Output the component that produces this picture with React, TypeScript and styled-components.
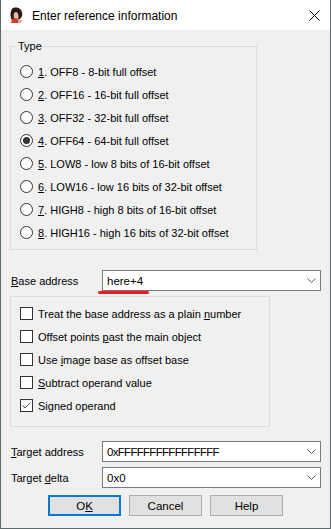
import React from "react";
import styled, { createGlobalStyle } from "styled-components";

const GlobalStyle = createGlobalStyle`
  html, body {
    margin: 0;
    padding: 0;
    background: #6b6f8a;
  }
  * {
    box-sizing: border-box;
  }
`;

const radioOptions = [
  { key: "1", text: ". OFF8 - 8-bit full offset" },
  { key: "2", text: ". OFF16 - 16-bit full offset" },
  { key: "3", text: ". OFF32 - 32-bit full offset" },
  { key: "4", text: ". OFF64 - 64-bit full offset", checked: true },
  { key: "5", text: ". LOW8 - low 8 bits of 16-bit offset" },
  { key: "6", text: ". LOW16 - low 16 bits of 32-bit offset" },
  { key: "7", text: ". HIGH8 - high 8 bits of 16-bit offset" },
  { key: "8", text: ". HIGH16 - high 16 bits of 32-bit offset" },
];

const checkOptions = [
  { pre: "Treat the base address as a plain ", key: "n", post: "umber" },
  { pre: "Offset points ", key: "p", post: "ast the main object" },
  { pre: "Use ", key: "i", post: "mage base as offset base" },
  { pre: "", key: "S", post: "ubtract operand value" },
  { pre: "Si", key: "", post: "gned operand", checked: true },
];

const Window = styled.div`
  width: 331px;
  height: 529px;
  display: flex;
  flex-direction: column;
  border: 1px solid #5c6b70;
  border-top: none;
  background: #f0f0f0;
  font-family: "Liberation Sans", Arial, sans-serif;
  font-size: 11px;
  color: #000;
`;

const TitleBar = styled.div`
  height: 30px;
  display: flex;
  align-items: center;
  background: #fff;
  padding-left: 7px;
  padding-right: 10px;
  flex-shrink: 0;
`;

const TitleText = styled.span`
  font-size: 12px;
  margin-left: 8px;
  flex: 1;
  padding-top: 1px;
`;

const Body = styled.div`
  flex: 1;
  display: flex;
  flex-direction: column;
  padding: 10px 9px 0 9px;
`;

const GroupBox = styled.fieldset<{ $width: number }>`
  width: ${(p) => p.$width}px;
  margin: 0;
  border: 1px solid #dcdcdc;
  padding: 7px 0 5px 9px;
  min-width: 0;
`;

const Legend = styled.legend`
  padding: 0 2px;
  margin-left: -4px;
  line-height: 13px;
`;

const PlainGroup = styled.div<{ $width: number }>`
  width: ${(p) => p.$width}px;
  border: 1px solid #dcdcdc;
  padding: 5px 0 9px 9px;
  margin-top: 5px;
`;

const OptionRow = styled.div`
  height: 23px;
  display: flex;
  align-items: center;
  gap: 5px;
  white-space: nowrap;
`;

const RadioCircle = styled.span<{ $checked?: boolean }>`
  width: 13px;
  height: 13px;
  border-radius: 50%;
  border: 1px solid #333;
  background: #fff;
  display: flex;
  align-items: center;
  justify-content: center;
  flex-shrink: 0;

  &::after {
    content: "";
    width: 7px;
    height: 7px;
    border-radius: 50%;
    background: ${(p) => (p.$checked ? "#333" : "transparent")};
  }
`;

const CheckBox = styled.span`
  width: 13px;
  height: 13px;
  border: 1px solid #333;
  background: #fff;
  display: flex;
  align-items: center;
  justify-content: center;
  flex-shrink: 0;
`;

const U = styled.span`
  text-decoration: underline;
  text-underline-offset: 1px;
`;

const FieldRow = styled.div<{ $mt: number }>`
  display: flex;
  align-items: center;
  margin-top: ${(p) => p.$mt}px;
  padding-left: 1px;
`;

const FieldLabel = styled.span`
  width: 91px;
  flex-shrink: 0;
`;

const Combo = styled.div`
  position: relative;
  width: 220px;
  height: 21px;
  border: 1px solid #7a7a7a;
  background: #fff;
  display: flex;
  align-items: center;
  padding-left: 4px;
  padding-right: 4px;
  font-size: 11.5px;
`;

const ComboValue = styled.span<{ $tight?: boolean }>`
  flex: 1;
  letter-spacing: ${(p) => (p.$tight ? "-0.7px" : "0")};
`;

const RedMark = styled.span`
  position: absolute;
  left: -5px;
  bottom: -4px;
  width: 51px;
  height: 3px;
  border-radius: 2px;
  background: #ed1c24;
`;

const ButtonRow = styled.div`
  display: flex;
  justify-content: center;
  gap: 8px;
  margin-top: 7px;
`;

const Button = styled.div<{ $default?: boolean }>`
  width: 73px;
  height: 21px;
  display: flex;
  align-items: center;
  justify-content: center;
  background: #e1e1e1;
  border: ${(p) => (p.$default ? "2px solid #0078d7" : "1px solid #adadad")};
  font-size: 11.5px;
`;

const Chevron = () => (
  <svg width="9" height="5" viewBox="0 0 9 5">
    <polyline points="0.5,0.5 4.5,4.5 8.5,0.5" fill="none" stroke="#606060" strokeWidth="1" />
  </svg>
);

const AppIcon = () => (
  <svg width="16" height="16" viewBox="0 0 16 16">
    <path d="M4 2 C7 -1 14 1 14 6 C15 9 13 11 12 12 L10 12 C11 9 10 6 8 5 C6 6 6 9 7 12 L4 13 C2 10 2 5 4 2 Z" fill="#2a1a14" />
    <path d="M6 6 C8 5 10 6 10 9 C10 11 9 12 8 12 C6 12 5 10 6 6 Z" fill="#e8b8a0" />
    <path d="M4 12 C6 11 9 11 11 12 L12 16 L3 16 Z" fill="#d23c2c" />
    <path d="M10 12 L14 13 L13 16 L10 16 Z" fill="#f0a0a0" />
  </svg>
);

const CloseIcon = () => (
  <svg width="11" height="11" viewBox="0 0 11 11">
    <path d="M0.5 0.5 L10.5 10.5 M10.5 0.5 L0.5 10.5" stroke="#000" strokeWidth="1" />
  </svg>
);

const CheckMark = () => (
  <svg width="11" height="11" viewBox="0 0 11 11">
    <polyline points="1.5,5.5 4,8 9.5,2.5" fill="none" stroke="#555" strokeWidth="1" />
  </svg>
);

export default function App() {
  return (
    <>
      <GlobalStyle />
      <Window>
        <TitleBar>
          <AppIcon />
          <TitleText>Enter reference information</TitleText>
          <CloseIcon />
        </TitleBar>
        <Body>
          <GroupBox $width={247}>
            <Legend>Type</Legend>
            {radioOptions.map((o) => (
              <OptionRow key={o.key}>
                <RadioCircle $checked={o.checked} />
                <span>
                  <U>{o.key}</U>
                  {o.text}
                </span>
              </OptionRow>
            ))}
          </GroupBox>

          <FieldRow $mt={20}>
            <FieldLabel>
              <U>B</U>ase address
            </FieldLabel>
            <Combo>
              <ComboValue>here+4</ComboValue>
              <Chevron />
              <RedMark />
            </Combo>
          </FieldRow>

          <PlainGroup $width={260}>
            {checkOptions.map((o, i) => (
              <OptionRow key={i}>
                <CheckBox>{o.checked && <CheckMark />}</CheckBox>
                <span>
                  {o.pre}
                  {o.key && <U>{o.key}</U>}
                  {o.post}
                </span>
              </OptionRow>
            ))}
          </PlainGroup>

          <FieldRow $mt={14}>
            <FieldLabel>
              <U>T</U>arget address
            </FieldLabel>
            <Combo>
              <ComboValue $tight>0xFFFFFFFFFFFFFFFF</ComboValue>
              <Chevron />
            </Combo>
          </FieldRow>

          <FieldRow $mt={5}>
            <FieldLabel>
              Target <U>d</U>elta
            </FieldLabel>
            <Combo>
              <ComboValue>0x0</ComboValue>
              <Chevron />
            </Combo>
          </FieldRow>

          <ButtonRow>
            <Button $default>
              O<U>K</U>
            </Button>
            <Button>Cancel</Button>
            <Button>Help</Button>
          </ButtonRow>
        </Body>
      </Window>
    </>
  );
}
